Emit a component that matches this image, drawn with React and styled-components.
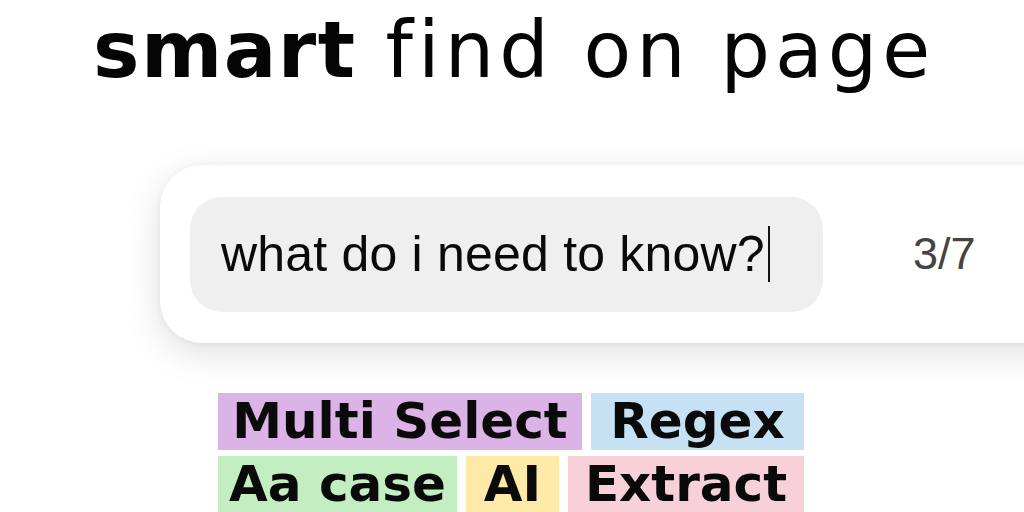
import React from "react";
import styled, { createGlobalStyle } from "styled-components";

const Global = createGlobalStyle`
  html, body {
    margin: 0;
    padding: 0;
    background: #ffffff;
    overflow: hidden;
  }
  body {
    width: 1024px;
    height: 512px;
  }
`;

const Page = styled.div`
  width: 1024px;
  height: 512px;
  display: flex;
  flex-direction: column;
  overflow: hidden;
`;

const Title = styled.h1`
  margin: 0;
  padding: 5px 0 0 93px;
  height: 88px;
  line-height: 90px;
  font-family: "DejaVu Sans", sans-serif;
  font-size: 78px;
  color: #050505;
  white-space: nowrap;
`;

const Bold = styled.span`
  font-weight: 700;
  letter-spacing: 1.5px;
`;

const Light = styled.span`
  font-weight: 400;
  letter-spacing: 5px;
  margin-left: 29px;
`;

const Card = styled.div`
  margin: 72px 0 0 160px;
  width: 1000px;
  height: 178px;
  box-sizing: border-box;
  padding: 32px 30px;
  background: #ffffff;
  border-radius: 42px;
  box-shadow: 0 10px 36px rgba(0, 0, 0, 0.13), 0 1px 6px rgba(0, 0, 0, 0.05);
  display: flex;
  align-items: center;
  flex-shrink: 0;
`;

const Field = styled.div`
  width: 633px;
  height: 115px;
  box-sizing: border-box;
  padding-left: 31px;
  background: #efefef;
  border-radius: 32px;
  display: flex;
  align-items: center;
  font-family: "Liberation Sans", Arial, sans-serif;
  font-size: 50px;
  letter-spacing: 0.2px;
  color: #0a0a0a;
  white-space: nowrap;
`;

const Caret = styled.span`
  display: inline-block;
  width: 2px;
  height: 56px;
  margin-left: 3px;
  background: #111111;
`;

const Count = styled.div`
  margin-left: 90px;
  font-family: "Liberation Sans", Arial, sans-serif;
  font-size: 45px;
  color: #444444;
`;

const Tags = styled.div`
  margin: 50px 0 0 218px;
  width: 586px;
  display: flex;
  flex-direction: column;
  gap: 6px;
`;

const Row = styled.div`
  display: flex;
  gap: 9px;
`;

const Tag = styled.div`
  flex: 0 0 ${(p) => p.$w}px;
  height: 57px;
  line-height: 57px;
  text-align: center;
  background: ${(p) => p.$bg};
  font-family: "DejaVu Sans", sans-serif;
  font-weight: 700;
  font-size: 50px;
  color: #0a0a0a;
  white-space: nowrap;
  overflow: hidden;
`;

export default function App() {
  return (
    <>
      <Global />
      <Page>
        <Title>
          <Bold>smart</Bold>
          <Light>find on page</Light>
        </Title>
        <Card>
          <Field>
            what do i need to know?
            <Caret />
          </Field>
          <Count>3/7</Count>
        </Card>
        <Tags>
          <Row>
            <Tag $w={364} $bg="#dcb3e6">Multi Select</Tag>
            <Tag $w={213} $bg="#c6e1f3">Regex</Tag>
          </Row>
          <Row>
            <Tag $w={239} $bg="#c3eec2">Aa case</Tag>
            <Tag $w={93} $bg="#fde9a8">AI</Tag>
            <Tag $w={236} $bg="#f8d1d8">Extract</Tag>
          </Row>
        </Tags>
      </Page>
    </>
  );
}
